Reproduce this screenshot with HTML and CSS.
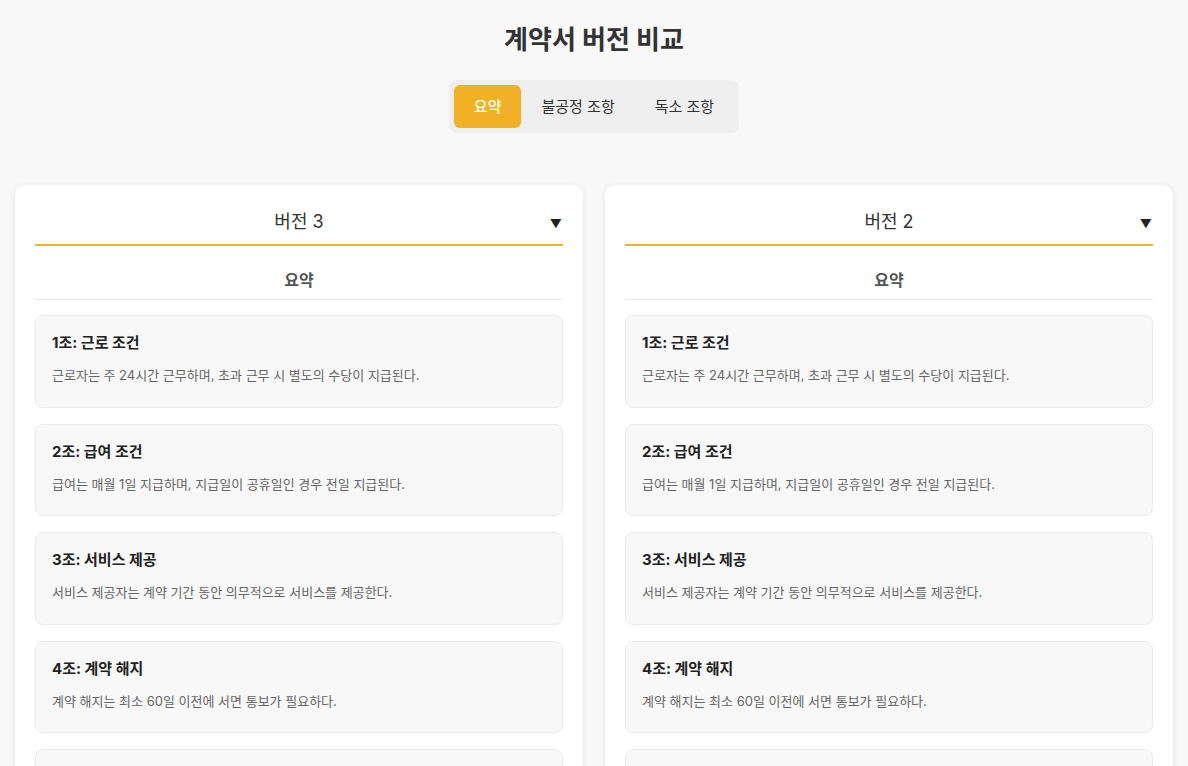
FILE: index.html
```html
<!DOCTYPE html>
<html lang="ko">
<head>
<meta charset="utf-8">
<title>계약서 버전 비교</title>
<link rel="stylesheet" href="styles.css">
</head>
<body>
<div class="page">
  <h1 class="title">계약서 버전 비교</h1>
  <div class="tabs-wrap">
    <div class="tabs">
      <button class="tab active">요약</button>
      <button class="tab">불공정 조항</button>
      <button class="tab">독소 조항</button>
    </div>
  </div>
  <div class="columns">
    <section class="card">
      <div class="select">
        <span class="select-label">버전 3</span>
        <span class="arrow">▼</span>
      </div>
      <h2 class="section-title">요약</h2>
      <div class="items">
        <div class="item"><h3>1조: 근로 조건</h3><p>근로자는 주 24시간 근무하며, 초과 근무 시 별도의 수당이 지급된다.</p></div>
        <div class="item"><h3>2조: 급여 조건</h3><p>급여는 매월 1일 지급하며, 지급일이 공휴일인 경우 전일 지급된다.</p></div>
        <div class="item"><h3>3조: 서비스 제공</h3><p>서비스 제공자는 계약 기간 동안 의무적으로 서비스를 제공한다.</p></div>
        <div class="item"><h3>4조: 계약 해지</h3><p>계약 해지는 최소 60일 이전에 서면 통보가 필요하다.</p></div>
        <div class="item"><h3>5조: 비밀 유지</h3><p>양 당사자는 계약 내용을 제3자에게 공개하지 않는다.</p></div>
      </div>
    </section>
    <section class="card">
      <div class="select">
        <span class="select-label">버전 2</span>
        <span class="arrow">▼</span>
      </div>
      <h2 class="section-title">요약</h2>
      <div class="items">
        <div class="item"><h3>1조: 근로 조건</h3><p>근로자는 주 24시간 근무하며, 초과 근무 시 별도의 수당이 지급된다.</p></div>
        <div class="item"><h3>2조: 급여 조건</h3><p>급여는 매월 1일 지급하며, 지급일이 공휴일인 경우 전일 지급된다.</p></div>
        <div class="item"><h3>3조: 서비스 제공</h3><p>서비스 제공자는 계약 기간 동안 의무적으로 서비스를 제공한다.</p></div>
        <div class="item"><h3>4조: 계약 해지</h3><p>계약 해지는 최소 60일 이전에 서면 통보가 필요하다.</p></div>
        <div class="item"><h3>5조: 비밀 유지</h3><p>양 당사자는 계약 내용을 제3자에게 공개하지 않는다.</p></div>
      </div>
    </section>
  </div>
</div>
</body>
</html>
```
FILE: styles.css
```css
* { box-sizing: border-box; }
html, body {
  margin: 0;
  padding: 0;
  background: #f8f8f8;
  font-family: "Inter", "Noto Sans CJK KR", sans-serif;
  color: #333;
}
.page {
  padding: 24px 15px 0;
}
.title {
  margin: 0;
  text-align: center;
  font-size: 26px;
  line-height: 32px;
  font-weight: 700;
  color: #333;
}
.tabs-wrap {
  display: flex;
  justify-content: center;
  margin-top: 24px;
}
.tabs {
  display: flex;
  background: #efefef;
  border-radius: 8px;
  padding: 5px;
}
.tab {
  border: none;
  background: transparent;
  font-family: inherit;
  font-size: 15px;
  line-height: 19px;
  padding: 12px 20px;
  color: #333;
  border-radius: 6px;
  cursor: pointer;
}
.tab.active {
  background: #f0b124;
  color: #fff;
  font-weight: 500;
}
.columns {
  display: grid;
  grid-template-columns: 1fr 1fr;
  gap: 22px;
  margin-top: 52px;
}
.card {
  background: #fff;
  border-radius: 10px;
  box-shadow: 0 1px 6px rgba(0,0,0,0.09);
  padding: 20px 20px 20px;
}
.select {
  position: relative;
  height: 41px;
  border-bottom: 2px solid #f0b124;
  display: flex;
  align-items: center;
  justify-content: center;
  padding-bottom: 10px;
}
.select-label {
  font-size: 18px;
  color: #333;
}
.arrow {
  position: absolute;
  right: 1px;
  top: 11px;
  font-size: 12px;
  color: #222;
}
.section-title {
  margin: 22px 0 0;
  padding-bottom: 7px;
  border-bottom: 1px solid #eaeaea;
  text-align: center;
  font-size: 16px;
  line-height: 24px;
  font-weight: 700;
  color: #555;
}
.items {
  display: flex;
  flex-direction: column;
  gap: 16px;
  margin-top: 15px;
}
.item {
  background: #f8f8f8;
  border: 1px solid #ebebeb;
  border-radius: 8px;
  padding: 16px 16px 20.5px;
}
.item h3 {
  margin: 0;
  font-size: 15px;
  line-height: 22px;
  font-weight: 700;
  color: #222;
}
.item p {
  margin: 11px 0 0;
  font-size: 13px;
  line-height: 21px;
  color: #666;
}
```
